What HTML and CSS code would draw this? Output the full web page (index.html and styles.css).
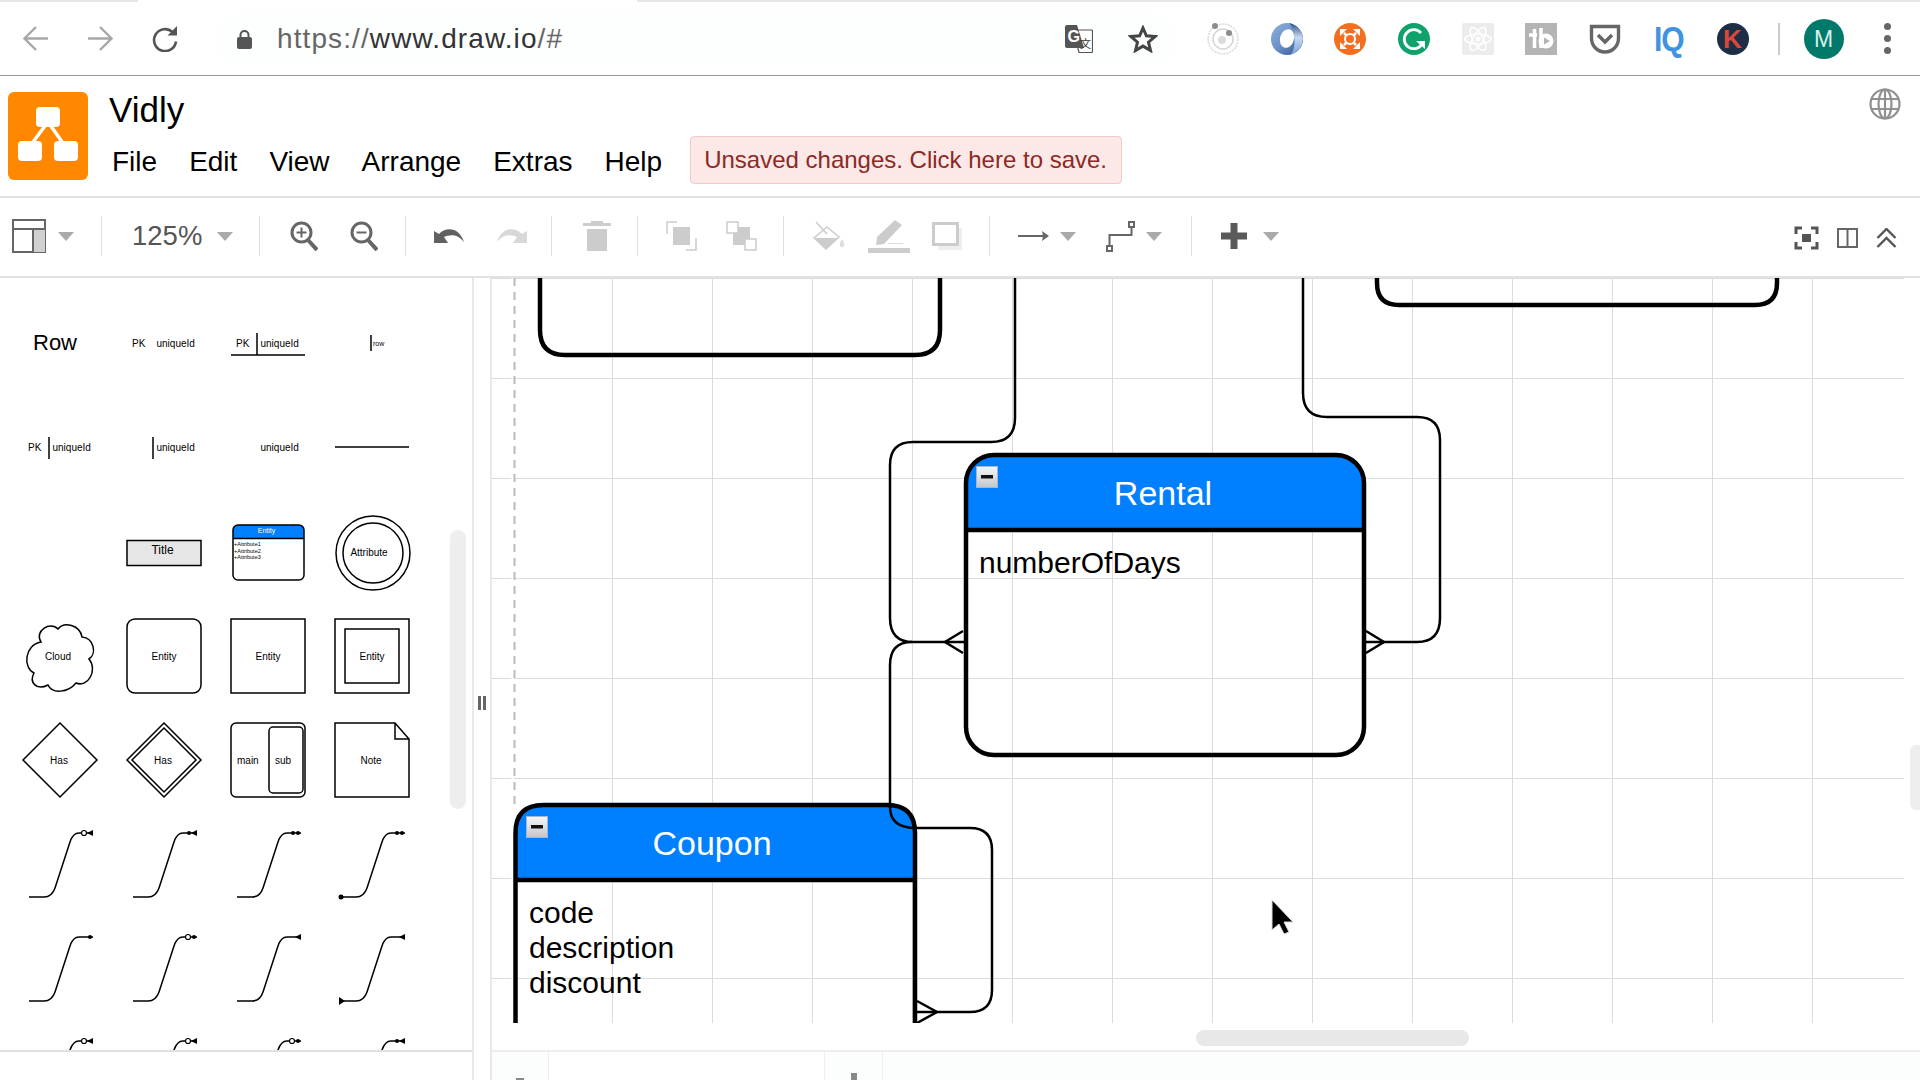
FILE: index.html
```html
<!DOCTYPE html>
<html lang="en">
<head>
    <meta charset="UTF-8">
    <meta name="viewport" content="width=device-width, initial-scale=1.0">
    <title>Vidly - draw.io</title>
    <link rel="stylesheet" href="styles.css">
</head>
<body>
    <!-- browser chrome -->
    <div class="tabstrip">
        <div class="tab-edge tab-left"></div>
        <div class="tab-gap"></div>
        <div class="tab-edge tab-right"></div>
    </div>
    <div class="browser-bar">
        <svg class="nav-btn" width="26" height="25" viewBox="0 0 26 25"><path d="M25 12.5H2M13 1L1.5 12.5 13 24" fill="none" stroke="#a8a8a8" stroke-width="2.4"/></svg>
        <svg class="nav-btn fwd" width="26" height="25" viewBox="0 0 26 25"><path d="M1 12.5H24M13 1l11.500 11.500L13 24" fill="none" stroke="#a8a8a8" stroke-width="2.400"/></svg>
        <svg class="nav-btn reload" width="29" height="26" viewBox="0 0 29 26"><path d="M25 15.500A11 11 0 1 1 21.500 6" fill="none" stroke="#555" stroke-width="2.600"/><path d="M16.500 9.500H26V0z" fill="#555"/></svg>
        <div class="omnibox">
            <svg width="17" height="20" viewBox="0 0 17 20"><path d="M4.500 9V6a4 4 0 0 1 8 0v3" fill="none" stroke="#555" stroke-width="2"/><rect x="1" y="8" width="15" height="12" rx="2" fill="#555"/></svg>
            <span class="url"><span class="url-scheme">https://</span>www.draw.io<span class="url-scheme">/#</span></span>
            <div class="omni-icons">
                <svg width="28" height="28" viewBox="0 0 28 28"><path d="M8.500 5H26.500a1 1 0 0 1 1 1V26.500a1 1 0 0 1-1 1H14z" fill="#fff" stroke="#555" stroke-width="1.200"/><path d="M2 0H12L19 23H2a2 2 0 0 1-2-2V2a2 2 0 0 1 2-2z" fill="#555"/><text class="ico-g" x="2.500" y="17">G</text><text class="ico-zh" x="15" y="23">文</text></svg>
                <svg width="30" height="28" viewBox="0 0 30 28"><path d="M15 3l3.400 7.800 8.600.800-6.500 5.600 2 8.300L15 21.100l-7.500 4.400 2-8.300L3 11.600l8.600-.800z" fill="none" stroke="#444" stroke-width="3"/></svg>
            </div>
        </div>
        <div class="extensions">
            <svg width="32" height="32" viewBox="0 0 32 32"><circle cx="16" cy="16" r="15" fill="#fff" stroke="#d8d8d8" stroke-width="1.500" stroke-dasharray="2 1"/><circle cx="16" cy="16" r="10" fill="none" stroke="#d4d4d4" stroke-width="1.500"/><circle cx="15" cy="17" r="4" fill="#dcdcdc"/><circle cx="8" cy="3" r="3" fill="#8c8c8c"/><circle cx="22" cy="10" r="3" fill="#8c8c8c"/></svg>
            <svg width="32" height="32" viewBox="0 0 32 32"><defs><linearGradient id="ring-a" x1="0" y1="0" x2="1" y2="1"><stop offset="0" stop-color="#8fb2de"/><stop offset="0.500" stop-color="#6a90c8"/><stop offset="1" stop-color="#2d4f88"/></linearGradient><linearGradient id="ring-b" x1="0" y1="0" x2="0" y2="1"><stop offset="0" stop-color="#2f4e84"/><stop offset="0.450" stop-color="#c7daf2"/><stop offset="1" stop-color="#7ea3d6"/></linearGradient></defs><circle cx="16" cy="16" r="16" fill="url(#ring-a)"/><path d="M18 0.200A16 16 0 0 1 20 31.500C25 26 25 6 18 0.200z" fill="url(#ring-b)"/><ellipse cx="16" cy="15.500" rx="7" ry="9.500" transform="rotate(15 16 15.500)" fill="#fff"/></svg>
            <svg width="32" height="32" viewBox="0 0 32 32"><circle cx="16" cy="16" r="16" fill="#f26f21"/><path d="M10 10l12 12M22 10L10 22" stroke="#fff" stroke-width="2.500"/><circle cx="16" cy="16" r="5" fill="#f26f21" stroke="#fff" stroke-width="2"/><path d="M6 6h7l-7 7zM26 6v7l-7-7zM26 26h-7l7-7zM6 26v-7l7 7z" fill="#fff"/></svg>
            <svg width="32" height="32" viewBox="0 0 32 32"><circle cx="16" cy="16" r="16" fill="#0fa36b"/><path d="M23 10A9.500 9.500 0 1 0 24 21" fill="none" stroke="#fff" stroke-width="2.800"/><path d="M18 18H27V26z" fill="#fff"/></svg>
            <svg width="32" height="32" viewBox="0 0 32 32"><rect width="32" height="32" rx="2" fill="#ececec"/><g fill="none" stroke="#fff" stroke-width="1.500"><ellipse cx="16" cy="16" rx="13" ry="5"/><ellipse cx="16" cy="16" rx="13" ry="5" transform="rotate(60 16 16)"/><ellipse cx="16" cy="16" rx="13" ry="5" transform="rotate(120 16 16)"/></g><circle cx="16" cy="16" r="2.500" fill="#fff"/></svg>
            <svg width="32" height="32" viewBox="0 0 32 32"><rect width="32" height="32" fill="#b4b4b4"/><path d="M4 12h8M9.500 6V25" stroke="#fff" stroke-width="3.500" fill="none"/><path d="M16 5V25" stroke="#fff" stroke-width="3.500" fill="none"/><circle cx="21" cy="18" r="7.500" fill="#fff"/><path d="M19 14.500l6 3.500-6 3.500z" fill="#b4b4b4"/></svg>
            <svg width="32" height="32" viewBox="0 0 32 32"><path d="M2.500 3.500h27V15c0 8-6 14-13.500 14S2.500 23 2.500 15z" fill="#fff" stroke="#666" stroke-width="3.400"/><path d="M9 12l7 7 7-7" fill="none" stroke="#666" stroke-width="3.400"/></svg>
            <span class="ext-iq">IQ</span>
            <span class="ext-k">K</span>
        </div>
        <div class="bar-sep"></div>
        <div class="avatar">M</div>
        <div class="kebab"><i></i><i></i><i></i></div>
    </div>

    <!-- app header -->
    <div class="app-header">
        <svg class="logo" width="80" height="88" viewBox="0 0 80 88"><rect width="80" height="88" rx="6" fill="#ff8800"/><path d="M40 30L22 54M40 30l17 24" stroke="#fff" stroke-width="3.500"/><rect x="28" y="15" width="24" height="20" rx="4" fill="#fff"/><rect x="10" y="49" width="24" height="20" rx="4" fill="#fff"/><rect x="46" y="49" width="24" height="20" rx="4" fill="#fff"/></svg>
        <div class="title-block">
            <div class="doc-title">Vidly</div>
            <div class="menu-row">
                <div class="menu">
                    <span>File</span><span>Edit</span><span>View</span><span>Arrange</span><span>Extras</span><span>Help</span>
                </div>
                <div class="save-banner">Unsaved changes. Click here to save.</div>
            </div>
        </div>
        <svg class="globe" width="32" height="32" viewBox="0 0 32 32"><g fill="none" stroke="#909090" stroke-width="2.200"><circle cx="16" cy="16" r="14.500"/><ellipse cx="16" cy="16" rx="6.500" ry="14.500"/><path d="M16 1.500v29M2.500 11h27M2.500 21h27"/></g></svg>
    </div>

    <!-- toolbar -->
    <div class="toolbar">
        <div class="tb-group g-view">
            <div class="tb-item">
                <svg width="34" height="34" viewBox="0 0 34 34"><rect x="1" y="1" width="32" height="32" fill="#fff" stroke="#666" stroke-width="2"/><rect x="21" y="10" width="12" height="23" fill="#d0d0d0"/><path d="M1 10h32M21 10v23" stroke="#666" stroke-width="2"/></svg>
                <i class="caret"></i>
            </div>
        </div>
        <div class="tb-group g-zoom">
            <div class="tb-item"><span class="zoom-val">125%</span><i class="caret"></i></div>
        </div>
        <div class="tb-group g-mag">
            <svg width="28" height="30" viewBox="0 0 28 30"><circle cx="11.500" cy="11.500" r="9.500" fill="none" stroke="#666" stroke-width="3"/><path d="M18 19l9 10" stroke="#666" stroke-width="4"/><path d="M6.500 11.500h10M11.500 6.500v10" stroke="#666" stroke-width="2"/></svg>
            <svg width="28" height="30" viewBox="0 0 28 30"><circle cx="11.500" cy="11.500" r="9.500" fill="none" stroke="#666" stroke-width="3"/><path d="M18 19l9 10" stroke="#666" stroke-width="4"/><path d="M6.500 11.500h10" stroke="#666" stroke-width="2"/></svg>
        </div>
        <div class="tb-group g-undo">
            <svg width="31" height="16" viewBox="0 0 31 16"><path d="M0 3L5 6C11-1 25-2 30 14 24 6 16 6 10 9L14 15H0Z" fill="#606060"/></svg>
            <svg width="31" height="16" viewBox="0 0 31 16"><path d="M31 3L26 6C20-1 6-2 1 14 7 6 15 6 21 9L17 15H31Z" fill="#d8d8d8"/></svg>
        </div>
        <div class="tb-group g-del">
            <svg width="28" height="30" viewBox="0 0 28 30"><path d="M8 0h12v2h8v3H0V2h8zM4 8h20v22H4z" fill="#ccc"/></svg>
        </div>
        <div class="tb-group g-order">
            <svg width="31" height="30" viewBox="0 0 31 30"><path d="M11 1H1V13M20 29H30V17" fill="none" stroke="#ccc" stroke-width="1.500"/><rect x="7" y="6" width="17" height="18" fill="#ccc"/></svg>
            <svg width="32" height="30" viewBox="0 0 32 30"><rect x="7" y="6" width="17" height="18" fill="#ccc"/><rect x="1" y="1" width="11" height="11" fill="#fff" stroke="#ccc" stroke-width="1.500"/><rect x="19" y="18" width="11" height="11" fill="#fff" stroke="#ccc" stroke-width="1.500"/></svg>
        </div>
        <div class="tb-group g-style">
            <svg width="33" height="30" viewBox="0 0 33 30"><path d="M14 6L1 17 13 28 26 16z" fill="#fff" stroke="#ccc" stroke-width="1.500"/><path d="M2 17h23L13 28z" fill="#ccc"/><path d="M3 1l11 12" stroke="#ccc" stroke-width="1.500"/><path d="M29 18c3 5 3 8 0 8s-3-3 0-8z" fill="#ddd"/></svg>
            <svg width="42" height="33" viewBox="0 0 42 33"><path d="M27 0l7 5-18 19-8 1 1-8z" fill="#ccc"/><rect x="20" y="23" width="15" height="1" fill="#ddd"/><rect y="28" width="42" height="5" fill="#ccc"/></svg>
            <svg width="30" height="28" viewBox="0 0 30 28"><rect x="6" y="6" width="24" height="22" fill="#eee"/><rect x="1.500" y="1.500" width="24" height="21" fill="#fff" stroke="#ccc" stroke-width="3"/></svg>
        </div>
        <div class="tb-group g-conn">
            <div class="tb-item">
                <svg width="31" height="16" viewBox="0 0 31 16"><path d="M0 8h28" stroke="#666" stroke-width="2"/><path d="M24 3l7 5-7 5 1-5z" fill="#666"/></svg>
                <i class="caret"></i>
            </div>
            <div class="tb-item">
                <svg width="29" height="31" viewBox="0 0 29 31"><path d="M3.500 25V14h22V7" fill="none" stroke="#666" stroke-width="2"/><rect x="1" y="25" width="5" height="5" fill="#fff" stroke="#666" stroke-width="2"/><rect x="23" y="1" width="5" height="5" fill="#fff" stroke="#666" stroke-width="2"/></svg>
                <i class="caret"></i>
            </div>
        </div>
        <div class="tb-group g-plus">
            <div class="tb-item">
                <svg width="26" height="26" viewBox="0 0 26 26"><path d="M9.500 0h7v9.500H26v7h-9.500V26h-7v-9.500H0v-7h9.500z" fill="#5a5a5a"/></svg>
                <i class="caret"></i>
            </div>
        </div>
        <div class="tb-right">
            <svg width="25" height="24" viewBox="0 0 25 24"><path d="M2 8V2h6M17 2h6v6M23 16v6h-6M8 22H2v-6" fill="none" stroke="#555" stroke-width="3"/><rect x="8" y="8" width="9" height="8" fill="#555"/></svg>
            <svg width="21" height="20" viewBox="0 0 21 20"><rect x="1" y="1" width="19" height="18" fill="#fff" stroke="#666" stroke-width="2"/><path d="M10.500 1v18" stroke="#666" stroke-width="2"/></svg>
            <svg width="21" height="20" viewBox="0 0 21 20"><path d="M1.500 10l9-9 9 9M1.500 19l9-9 9 9" fill="none" stroke="#555" stroke-width="2.400"/></svg>
        </div>
    </div>

    <div class="main">
        <!-- shape palette -->
        <div class="sidebar">
            <svg class="svg-defs" width="0" height="0">
                <defs>
                    <path id="curve" d="M21 85H36Q44 85 47 76L62 30Q65 21 71 21H85" fill="none" stroke="#000" stroke-width="1.500"/>
                    <path id="m-tri" d="M85 18v6l-6-3z"/>
                    <circle id="m-dot" cx="82" cy="21" r="2"/>
                    <circle id="m-dot2" cx="77" cy="21" r="2"/>
                    <circle id="m-open" cx="76" cy="21" r="2.500" fill="#fff" stroke="#000" stroke-width="1.200"/>
                </defs>
            </svg>
            <div class="palette">
                <svg class="cell" viewBox="0 0 104 104"><text class="t-row" x="25" y="58">Row</text></svg>
                <svg class="cell" viewBox="0 0 104 104"><text class="t" x="20" y="55">PK</text><text class="t" x="44.500" y="55">uniqueId</text></svg>
                <svg class="cell" viewBox="0 0 104 104"><text class="t" x="20" y="55">PK</text><text class="t" x="44.500" y="55">uniqueId</text><path d="M41 41V63M15 63H89" class="ln"/></svg>
                <svg class="cell" viewBox="0 0 104 104"><path d="M51 43V59" class="ln"/><text class="t-xs" x="53" y="54">row</text></svg>

                <svg class="cell" viewBox="0 0 104 104"><text class="t" x="20" y="55">PK</text><path d="M41 41V63" class="ln"/><text class="t" x="44.500" y="55">uniqueId</text></svg>
                <svg class="cell" viewBox="0 0 104 104"><path d="M41 41V63" class="ln"/><text class="t" x="44.500" y="55">uniqueId</text></svg>
                <svg class="cell" viewBox="0 0 104 104"><text class="t" x="44.500" y="55">uniqueId</text></svg>
                <svg class="cell" viewBox="0 0 104 104"><path d="M15 51H89" class="ln"/></svg>

                <svg class="cell" viewBox="0 0 104 104"></svg>
                <svg class="cell" viewBox="0 0 104 104"><rect x="15" y="40.500" width="74" height="25" fill="#e6e6e6" class="ln"/><text class="t-md" x="50.500" y="54" text-anchor="middle">Title</text></svg>
                <svg class="cell" viewBox="0 0 104 104"><path d="M17 38V30a5 5 0 0 1 5-5H83a5 5 0 0 1 5 5v8z" fill="#0080ff"/><rect x="17" y="25" width="71" height="55" rx="5" fill="none" class="ln"/><path d="M17 38.500H88" class="ln"/><text class="t-xs white" x="50.500" y="33" text-anchor="middle">Entity</text><text class="t-xxs" x="18" y="46">+Attribute1</text><text class="t-xxs" x="18" y="53">+Attribute2</text><text class="t-xxs" x="18" y="59">+Attribute3</text></svg>
                <svg class="cell" viewBox="0 0 104 104"><circle cx="53" cy="53" r="37" fill="none" class="ln"/><circle cx="53" cy="53" r="30" fill="none" class="ln"/><text class="t" x="49" y="56" text-anchor="middle">Attribute</text></svg>

                <svg class="cell" viewBox="0 0 104 104"><path d="M33 38C26 27 42 17 50 25 56 17 72 21 74 33 86 34 89 50 81 55 90 66 80 84 68 79 60 89 44 90 40 81 28 87 21 78 26 69 15 64 16 41 33 38Z" fill="none" class="ln"/><text class="t" x="50" y="56" text-anchor="middle">Cloud</text></svg>
                <svg class="cell" viewBox="0 0 104 104"><rect x="15" y="15" width="74" height="74" rx="8" fill="none" class="ln"/><text class="t" x="52" y="56" text-anchor="middle">Entity</text></svg>
                <svg class="cell" viewBox="0 0 104 104"><rect x="15" y="15" width="74" height="74" fill="none" class="ln"/><text class="t" x="52" y="56" text-anchor="middle">Entity</text></svg>
                <svg class="cell" viewBox="0 0 104 104"><rect x="15" y="15" width="74" height="74" fill="none" class="ln"/><rect x="25" y="25" width="54" height="54" fill="none" class="ln"/><text class="t" x="52" y="56" text-anchor="middle">Entity</text></svg>

                <svg class="cell" viewBox="0 0 104 104"><path d="M52 15L89 52 52 89 15 52Z" fill="none" class="ln"/><text class="t" x="51" y="56" text-anchor="middle">Has</text></svg>
                <svg class="cell" viewBox="0 0 104 104"><path d="M52 15L89 52 52 89 15 52Z" fill="none" class="ln"/><path d="M52 20L84 52 52 84 20 52Z" fill="none" class="ln"/><text class="t" x="51" y="56" text-anchor="middle">Has</text></svg>
                <svg class="cell" viewBox="0 0 104 104"><rect x="15" y="15" width="74" height="74" rx="5" fill="none" class="ln"/><rect x="53" y="19" width="34" height="66" rx="4" fill="none" class="ln"/><text class="t" x="21" y="56">main</text><text class="t" x="59" y="56">sub</text></svg>
                <svg class="cell" viewBox="0 0 104 104"><path d="M15 15H75L89 31V89H15ZM75 15V31H89" fill="none" class="ln"/><text class="t" x="51" y="56" text-anchor="middle">Note</text></svg>

                <svg class="cell" viewBox="0 0 104 104"><use href="#curve"/><use href="#m-tri"/><use href="#m-open"/></svg>
                <svg class="cell" viewBox="0 0 104 104"><use href="#curve"/><use href="#m-tri"/><use href="#m-dot2"/></svg>
                <svg class="cell" viewBox="0 0 104 104"><use href="#curve"/><use href="#m-dot"/><use href="#m-dot2"/></svg>
                <svg class="cell" viewBox="0 0 104 104"><use href="#curve"/><use href="#m-dot"/><use href="#m-dot2"/><circle cx="21" cy="85" r="2.500"/></svg>

                <svg class="cell" viewBox="0 0 104 104"><use href="#curve"/><use href="#m-dot"/></svg>
                <svg class="cell" viewBox="0 0 104 104"><use href="#curve"/><use href="#m-dot"/><use href="#m-open"/></svg>
                <svg class="cell" viewBox="0 0 104 104"><use href="#curve"/><use href="#m-tri"/></svg>
                <svg class="cell" viewBox="0 0 104 104"><use href="#curve"/><use href="#m-tri"/><path d="M19 81v8l6-4z"/></svg>

                <svg class="cell" viewBox="0 0 104 104"><use href="#curve"/><use href="#m-tri"/><use href="#m-open"/></svg>
                <svg class="cell" viewBox="0 0 104 104"><use href="#curve"/><use href="#m-tri"/><use href="#m-open"/></svg>
                <svg class="cell" viewBox="0 0 104 104"><use href="#curve"/><use href="#m-dot"/><use href="#m-open"/></svg>
                <svg class="cell" viewBox="0 0 104 104"><use href="#curve"/><use href="#m-tri"/><use href="#m-dot2"/></svg>
            </div>
            <div class="side-scroll"></div>
            <div class="side-foot"></div>
        </div>

        <div class="gutter"><i></i><i></i></div>

        <div class="workspace">
            <div class="canvas">
                <svg class="diagram" width="1412" height="745" viewBox="0 0 1412 745">
                    <defs>
                        <linearGradient id="fold-btn" x1="0" y1="0" x2="0" y2="1">
                            <stop offset="0" stop-color="#f6f7f9"/>
                            <stop offset="1" stop-color="#c2c6cc"/>
                        </linearGradient>
                        <g id="fold">
                            <rect x="0.500" y="0.500" width="21" height="21" fill="url(#fold-btn)" stroke="#9fb8d8"/>
                            <rect x="5" y="9" width="12" height="3.500" fill="#111"/>
                        </g>
                    </defs>

                    <!-- page break line -->
                    <path d="M20.500 0V745" stroke="#fff" stroke-width="2"/>
                    <path d="M22.500 0V527" stroke="#bbb" stroke-width="2" stroke-dasharray="8 6"/>

                    <!-- entities cut off above -->
                    <path d="M48 -10V52Q48 77 73 77H423Q448 77 448 52V-10" class="box"/>
                    <path d="M885 -10V5Q885 27 907 27H1263Q1285 27 1285 5V-10" class="box"/>

                    <!-- Rental -->
                    <path d="M474 252V205Q474 177 502 177H844Q872 177 872 205V252Z" fill="#0080ff"/>
                    <rect x="474" y="177" width="398" height="300" rx="28" class="box"/>
                    <path d="M474 252H872" class="box"/>
                    <text class="ent-title" x="671" y="227">Rental</text>
                    <text class="ent-attr" x="487" y="295">numberOfDays</text>
                    <use href="#fold" x="484" y="188"/>

                    <!-- Coupon -->
                    <path d="M23.500 602V555Q23.500 527 51.500 527H395Q423 527 423 555V602Z" fill="#0080ff"/>
                    <path d="M23.500 760V555Q23.500 527 51.500 527H395Q423 527 423 555V760" class="box"/>
                    <path d="M23.500 602H423" class="box"/>
                    <text class="ent-title" x="220" y="577">Coupon</text>
                    <text class="ent-attr" x="37" y="645">code</text>
                    <text class="ent-attr" x="37" y="680">description</text>
                    <text class="ent-attr" x="37" y="715">discount</text>
                    <use href="#fold" x="34" y="538"/>

                    <!-- connectors -->
                    <path d="M523 0V140Q523 164 499 164H421Q398 164 398 187V340Q398 364 421 364H472" class="conn"/>
                    <path d="M398 529V387Q398 364 420 364" class="conn"/>
                    <path d="M398 529Q398 550 424 550H478Q500 550 500 572V712Q500 734 478 734H425" class="conn"/>
                    <path d="M811 0V115Q811 139 835 139H925Q948 139 948 162V340Q948 364 925 364H874" class="conn"/>
                    <!-- crow's feet -->
                    <path d="M471 353L453 364 471 375M874 353L892 364 874 375M425 723L445 734 425 745" class="conn"/>

                    <!-- mouse pointer -->
                    <path d="M780 622V652L787 646 792 656 797 654 792 644 801 644Z" fill="#000" stroke="#ddd" stroke-width="1"/>
                </svg>
            </div>
            <div class="h-scroll"></div>
            <div class="v-scroll"></div>
            <div class="page-tabs">
                <div class="pt-cell pt-first"><i class="pt-minus"></i></div>
                <div class="pt-cell pt-page"></div>
                <div class="pt-cell pt-add"><i class="pt-plus"></i></div>
            </div>
        </div>
    </div>
</body>
</html>
```

FILE: styles.css
```css
html, body {
    margin: 0;
    padding: 0;
    width: 1920px;
    height: 1080px;
    overflow: hidden;
    background: #fff;
    font-family: 'Liberation Sans', Arial, sans-serif;
    color: #000;
}

svg {
    display: block;
    flex: none;
}

/* browser chrome */
.tabstrip {
    display: flex;
    height: 2px;
}

.tab-edge {
    background: #e6e6e6;
}

.tab-left {
    width: 138px;
}

.tab-gap {
    width: 499px;
}

.tab-right {
    flex: 1;
}

.browser-bar {
    display: flex;
    align-items: center;
    height: 73px;
    border-bottom: 1px solid #999;
    padding-left: 23px;
}

.nav-btn {
    margin-right: 38px;
}

.nav-btn.reload {
    margin-right: 34px;
}

.omnibox {
    display: flex;
    align-items: center;
    width: 962px;
    height: 50px;
    background: #fdfefe;
    border-radius: 25px;
    padding-left: 22px;
    box-sizing: border-box;
}

.url {
    margin-left: 24px;
    font-size: 28px;
    letter-spacing: 1.1px;
    color: #333;
}

.url-scheme {
    color: #666;
}

.omni-icons {
    display: flex;
    align-items: center;
    gap: 35px;
    margin-left: auto;
    margin-right: 18px;
}

.ico-g {
    font-size: 16px;
    font-weight: bold;
    fill: #fff;
}

.ico-zh {
    font-family: 'Noto Sans CJK SC', sans-serif;
    font-size: 11px;
    fill: #333;
}

.extensions {
    display: flex;
    align-items: center;
    gap: 31.7px;
    margin-left: 31px;
}

.ext-iq {
    width: 32px;
    font-size: 30px;
    font-weight: bold;
    letter-spacing: -1px;
    color: #3f93e0;
    text-align: center;
    transform: scaleY(1.15);
}

.ext-k {
    width: 32px;
    height: 32px;
    line-height: 32px;
    border-radius: 50%;
    background: #1e2f45;
    color: #d9483b;
    font-size: 26px;
    font-weight: bold;
    text-align: center;
}

.bar-sep {
    width: 2px;
    height: 32px;
    background: #ccc;
    margin-left: 29px;
}

.avatar {
    width: 40px;
    height: 40px;
    line-height: 40px;
    margin-left: 24px;
    border-radius: 50%;
    background: #00796b;
    color: #d5f0ec;
    font-size: 23px;
    text-align: center;
}

.kebab {
    display: flex;
    flex-direction: column;
    gap: 5px;
    margin-left: 40px;
}

.kebab i {
    width: 7px;
    height: 7px;
    border-radius: 50%;
    background: #666;
}

/* app header */
.app-header {
    display: flex;
    height: 104px;
    border-bottom: 2px solid #e2e2e2;
    padding: 16px 0 0 8px;
}

.title-block {
    margin-left: 21px;
}

.doc-title {
    font-size: 35px;
    line-height: 40px;
    margin-top: -2px;
}

.menu-row {
    display: flex;
    align-items: center;
    margin-top: 6px;
}

.menu {
    display: flex;
    gap: 32px;
    margin-left: 3px;
    padding-top: 4px;
    font-size: 28px;
}

.save-banner {
    margin-left: 28px;
    height: 48px;
    line-height: 46px;
    padding: 0 14px 0 13px;
    box-sizing: border-box;
    background: #fde8e8;
    border: 1px solid #f3c9c9;
    border-radius: 4px;
    color: #8b2a24;
    font-size: 24px;
}

.globe {
    margin-left: auto;
    margin-right: 19px;
    margin-top: -4px;
}

/* toolbar */
.toolbar {
    display: flex;
    align-items: center;
    height: 80px;
    padding-bottom: 2px;
    border-bottom: 2px solid #e2e2e2;
    box-sizing: border-box;
}

.tb-group {
    display: flex;
    align-items: center;
    height: 40px;
    box-sizing: border-box;
    border-right: 1px solid #dfdfdf;
}

.tb-item {
    display: flex;
    align-items: center;
}

.caret {
    width: 0;
    height: 0;
    border-left: 8px solid transparent;
    border-right: 8px solid transparent;
    border-top: 9px solid #aaa;
}

.g-view {
    width: 102px;
    padding-left: 12px;
}

.g-view .tb-item {
    gap: 12px;
}

.g-zoom {
    width: 158px;
    padding-left: 30px;
}

.g-zoom .tb-item {
    gap: 15px;
}

.zoom-val {
    width: 70px;
    font-size: 27.5px;
    color: #555;
}

.g-mag {
    width: 146px;
    padding-left: 30px;
    gap: 32px;
}

.g-undo {
    width: 146px;
    padding-left: 28px;
    gap: 31px;
}

.g-del {
    width: 86px;
    padding-left: 31px;
}

.g-order {
    width: 146px;
    padding-left: 28px;
    gap: 29px;
}

.g-style {
    width: 206px;
    padding-left: 29px;
    gap: 22px;
}

.g-conn {
    width: 202px;
    padding-left: 28px;
    gap: 30px;
}

.g-conn .tb-item {
    gap: 11px;
}

.g-plus {
    padding-left: 29px;
    border-right: none;
}

.g-plus .tb-item {
    gap: 16px;
}

.tb-right {
    display: flex;
    align-items: center;
    gap: 18px;
    margin-left: auto;
    margin-right: 23px;
    padding-top: 3px;
}

/* main area */
.main {
    display: flex;
    height: 802px;
}

.sidebar {
    position: relative;
    display: flex;
    flex-direction: column;
    width: 474px;
    border-right: 2px solid #e8e8e8;
    box-sizing: border-box;
}

.svg-defs {
    position: absolute;
}

.palette {
    display: grid;
    grid-template-columns: repeat(4, 104px);
    grid-auto-rows: 104px;
    flex: 1;
    min-height: 0;
    overflow: hidden;
    padding: 14px 0 0 8px;
}

.cell {
    width: 104px;
    height: 104px;
    overflow: visible;
}

.t {
    font-size: 10px;
}

.t-row {
    font-size: 22px;
}

.t-md {
    font-size: 12px;
}

.t-xs {
    font-size: 7px;
}

.t-xxs {
    font-size: 5.500px;
}

.white {
    fill: #fff;
}

.ln {
    stroke: #000;
    stroke-width: 1.500;
}

.side-scroll {
    position: absolute;
    left: 450px;
    top: 252px;
    width: 16px;
    height: 279px;
    border-radius: 8px;
    background: #eee;
}

.side-foot {
    flex: none;
    height: 30px;
    border-top: 2px solid #e0e0e0;
    box-sizing: border-box;
}

.gutter {
    display: flex;
    justify-content: center;
    align-items: center;
    gap: 2.500px;
    width: 16px;
    padding-top: 48px;
    box-sizing: border-box;
}

.gutter i {
    width: 2.500px;
    height: 14px;
    background: #666;
}

.workspace {
    position: relative;
    flex: 1;
    display: flex;
    flex-direction: column;
    border-left: 2px solid #e8e8e8;
}

.canvas {
    width: 1412px;
    height: 745px;
    background-image:
        linear-gradient(#dcdcdc 1.500px, transparent 1.500px),
        linear-gradient(90deg, #dcdcdc 1.500px, transparent 1.500px);
    background-size: 100px 100px;
    background-position: 20px 0;
    overflow: hidden;
}

.box {
    fill: none;
    stroke: #000;
    stroke-width: 4.500;
}

.conn {
    fill: none;
    stroke: #000;
    stroke-width: 2.500;
}

.ent-title {
    font-size: 34px;
    fill: #fff;
    text-anchor: middle;
}

.ent-attr {
    font-size: 30px;
}

.h-scroll {
    position: absolute;
    left: 704px;
    top: 752px;
    width: 273px;
    height: 16px;
    border-radius: 8px;
    background: #e8e8e8;
}

.v-scroll {
    position: absolute;
    right: 0;
    top: 467px;
    width: 10px;
    height: 65px;
    border-radius: 6px 0 0 6px;
    background: #eee;
}

.page-tabs {
    display: flex;
    margin-top: 27px;
    height: 30px;
    border-top: 2px solid #eee;
    background: #fcfdfd;
    box-sizing: border-box;
}

.pt-cell {
    display: flex;
    justify-content: center;
    box-sizing: border-box;
    border-right: 1px solid #eee;
    overflow: hidden;
}

.pt-first {
    width: 57px;
}

.pt-page {
    width: 276px;
    background: #fff;
}

.pt-add {
    width: 58px;
}

.pt-minus {
    width: 8px;
    height: 2px;
    margin-top: 26px;
    background: #888;
}

.pt-plus {
    width: 6px;
    height: 10px;
    margin-top: 21px;
    background: #888;
}
```
